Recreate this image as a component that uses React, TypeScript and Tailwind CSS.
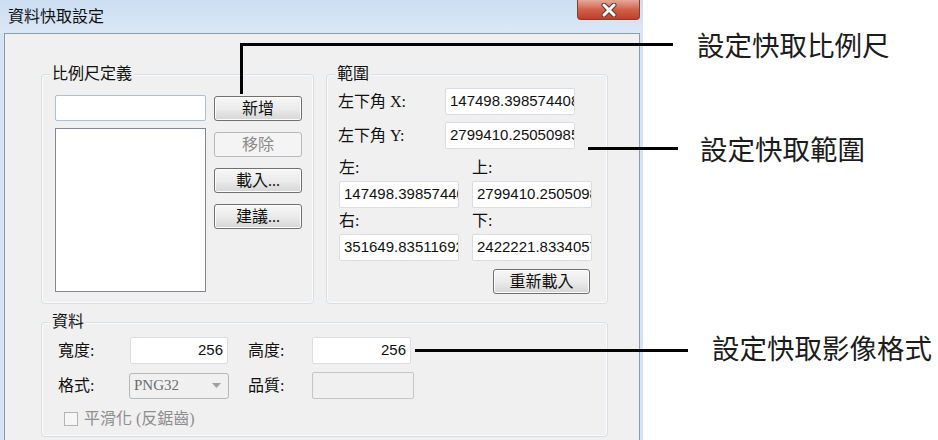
import React from "react";

const labelFont = "font-['Liberation_Serif','Noto_Sans_CJK_TC',serif]";

const Group = ({ title, className, children }: { title: string; className: string; children: React.ReactNode }) => (
    <div className={`relative border border-[#d5dfe5] rounded-[4px] shadow-[inset_0_0_0_1px_#fbfbfb] ${className}`}>
        <span className="absolute -top-[10px] left-[8px] px-[2px] bg-[#f0f0f0] leading-[18px] text-[16px] text-[#111]">{title}</span>
        {children}
    </div>
);

const Button = ({ label, disabled, className = "" }: { label: string; disabled?: boolean; className?: string }) => (
    <div
        className={`h-[25px] flex items-center justify-center rounded-[3px] border text-[16px] leading-none ${
            disabled
                ? "border-[#b5b9bc] bg-[#f4f4f4] text-[#8c8c8c]"
                : "border-[#707070] bg-linear-to-b from-[#f7f7f7] via-[#ebebeb] to-[#d6d6d6] text-[#111] shadow-[inset_0_0_0_1px_#fcfcfc]"
        } ${className}`}
    >
        {label}
    </div>
);

const Field = ({ value, className = "", align = "left" }: { value: string; className?: string; align?: "left" | "right" }) => (
    <div
        className={`h-[27px] bg-white border border-[#d9dee5] rounded-[2px] overflow-hidden whitespace-nowrap flex items-center px-[4px] text-[15px] text-[#111] font-['Liberation_Sans',sans-serif] ${
            align === "right" ? "justify-end" : ""
        } ${className}`}
    >
        {value}
    </div>
);

const Callout = ({ text, className }: { text: string; className: string }) => (
    <div className={`absolute text-[27.5px] leading-[32px] text-[#1c1c1c] font-['Noto_Sans_CJK_TC',sans-serif] ${className}`}>{text}</div>
);

export default function App() {
    return (
        <div className={`relative w-[938px] h-[440px] overflow-hidden bg-white ${labelFont}`}>
            {/* dialog window */}
            <div className="w-[643px] h-[470px] flex flex-col bg-[#d6e5f5]">
                <div className="relative h-[33px] shrink-0 flex items-center pl-[8px] bg-linear-to-b from-[#cbdef2] to-[#dbe8f6]">
                    <span className="text-[16px] text-[#111] font-['Noto_Sans_CJK_TC',sans-serif] -mt-[4px]">資料快取設定</span>
                    <div className="absolute top-0 left-[577px] w-[63px] h-[20px] rounded-b-[4px] border border-t-0 border-[#8d3a2c] bg-linear-to-b from-[#e6a898] via-[#d0614c] to-[#c23d28] flex items-center justify-center">
                        <svg width="20" height="14" viewBox="0 0 20 14">
                            <path d="M5 2 L15 12 M15 2 L5 12" stroke="#5b3a33" strokeWidth="5" strokeLinecap="round" />
                            <path d="M5 2 L15 12 M15 2 L5 12" stroke="#ffffff" strokeWidth="3" strokeLinecap="round" />
                        </svg>
                    </div>
                </div>

                <div className="ml-[4px] w-[636px] flex-1 border border-[#8e9aa8] bg-[#f0f0f0] pl-[36px] pt-[40px]">
                    <div className="flex gap-[12px]">
                        <Group title="比例尺定義" className="w-[273px] h-[230px] pl-[13px] pt-[20px]">
                            <div className="flex gap-[8px]">
                                <div className="w-[151px] flex flex-col gap-[7px]">
                                    <div className="h-[26px] bg-white border border-[#a9bfd9] rounded-[2px]" />
                                    <div className="h-[164px] bg-white border border-[#828790]" />
                                </div>
                                <div className="w-[88px] flex flex-col gap-[11px] pt-[1px]">
                                    <Button label="新增" />
                                    <Button label="移除" disabled />
                                    <Button label="載入..." />
                                    <Button label="建議..." />
                                </div>
                            </div>
                        </Group>

                        <Group title="範圍" className="w-[282px] h-[230px] pl-[11px] pt-[13px] text-[16px] text-[#111]">
                            <div className="flex items-center">
                                <span className="w-[107px]">左下角 X:</span>
                                <Field value="147498.398574408" className="w-[130px]" />
                            </div>
                            <div className="flex items-center mt-[7px]">
                                <span className="w-[107px]">左下角 Y:</span>
                                <Field value="2799410.25050985" className="w-[130px]" />
                            </div>
                            <div className="ml-[1px] w-[253px] mt-[11px] grid grid-cols-[120px_120px] gap-x-[13px] gap-y-[5px]">
                                {[
                                    { label: "左:", value: "147498.398574408" },
                                    { label: "上:", value: "2799410.25050985" },
                                    { label: "右:", value: "351649.835116923" },
                                    { label: "下:", value: "2422221.83340571" },
                                ].map((f) => (
                                    <div key={f.label} className="flex flex-col gap-[5px]">
                                        <span className="h-[16px] leading-[16px]">{f.label}</span>
                                        <Field value={f.value} className="w-[120px] px-[3px]" />
                                    </div>
                                ))}
                                <div className="col-span-2 flex justify-end mt-[3px] pr-[2px]">
                                    <Button label="重新載入" className="w-[97px]" />
                                </div>
                            </div>
                        </Group>
                    </div>

                    <Group title="資料" className="mt-[18px] w-[567px] h-[115px] pl-[16px] pt-[14px] text-[16px] text-[#111]">
                        <div className="flex items-center">
                            <span className="w-[72px]">寬度:</span>
                            <Field value="256" align="right" className="w-[98px] h-[26px]" />
                            <span className="w-[64px] ml-[20px]">高度:</span>
                            <Field value="256" align="right" className="w-[99px] h-[26px]" />
                        </div>
                        <div className="flex items-center mt-[8px]">
                            <span className="w-[71px]">格式:</span>
                            <div className="w-[100px] h-[26px] flex items-center justify-between pl-[4px] pr-[7px] border border-[#b3b8bc] rounded-[3px] text-[15px] text-[#6d6d6d]">
                                <span>PNG32</span>
                                <svg width="9" height="5" viewBox="0 0 9 5">
                                    <polygon points="0,0 9,0 4.5,5" fill="#a0a0a0" />
                                </svg>
                            </div>
                            <span className="w-[64px] ml-[19px]">品質:</span>
                            <div className="w-[102px] h-[27px] border border-[#c2c6ca] rounded-[2px]" />
                        </div>
                        <div className="flex items-center h-[16px] mt-[12px] ml-[6px] text-[#8d8d8d]">
                            <div className="w-[14px] h-[14px] border border-[#b4b4b4] bg-[#f6f6f6]" />
                            <span className="ml-[6px]">平滑化 (反鋸齒)</span>
                        </div>
                    </Group>
                </div>
            </div>

            {/* callout lines */}
            <div className="absolute left-[240px] top-[43px] w-[3px] h-[51px] bg-black" />
            <div className="absolute left-[240px] top-[43px] w-[433px] h-[3px] bg-black" />
            <div className="absolute left-[588px] top-[147px] w-[90px] h-[3px] bg-black" />
            <div className="absolute left-[415px] top-[349px] w-[273px] h-[3px] bg-black" />

            <Callout text="設定快取比例尺" className="left-[697px] top-[28px]" />
            <Callout text="設定快取範圍" className="left-[700px] top-[132px]" />
            <Callout text="設定快取影像格式" className="left-[712px] top-[331px]" />
        </div>
    );
}
